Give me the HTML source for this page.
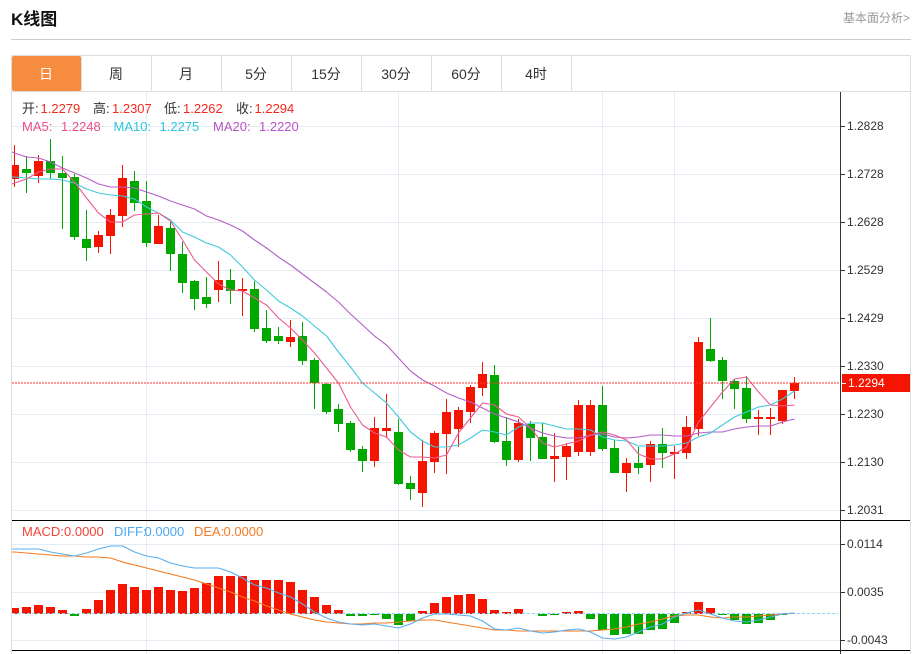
<!DOCTYPE html>
<html lang="zh">
<head>
<meta charset="utf-8">
<title>K线图</title>
<style>
html,body{margin:0;padding:0;background:#fff;width:915px;height:654px;overflow:hidden}
svg{display:block;font-family:"Liberation Sans","Noto Sans CJK SC",sans-serif}
.c{shape-rendering:crispEdges;fill:none}
.l{fill:none;stroke-width:1.1;stroke-linejoin:round}
.a{font-size:12px;fill:#333}
.t{font-size:14px;fill:#333;text-anchor:middle}
.i{font-size:13px}
</style>
</head>
<body>
<svg width="915" height="654" viewBox="0 0 915 654" xmlns="http://www.w3.org/2000/svg">
<defs><clipPath id="k"><rect x="12" y="92" width="828" height="562"/></clipPath></defs>

<text x="11" y="25" font-size="17" font-weight="bold" fill="#111">K线图</text>
<text x="910" y="22" font-size="12" fill="#999" text-anchor="end">基本面分析&gt;</text>
<path class="c" stroke="#ccc" d="M11 39.5H911"/>

<!-- frame + tabs -->
<path class="c" stroke="#ddd" d="M11.5 55.5H910.5V654M11.5 55.5V654M12 91.5H911M81.5 56V91M151.5 56V91M221.5 56V91M291.5 56V91M361.5 56V91M431.5 56V91M501.5 56V91M571.5 56V91"/>
<rect x="12" y="56" width="69" height="35" rx="2" fill="#f58c3f"/>
<text class="t" x="46" y="79" style="fill:#fff">日</text>
<text class="t" x="116" y="79">周</text>
<text class="t" x="186" y="79">月</text>
<text class="t" x="256" y="79">5分</text>
<text class="t" x="326" y="79">15分</text>
<text class="t" x="396" y="79">30分</text>
<text class="t" x="466" y="79">60分</text>
<text class="t" x="536" y="79">4时</text>

<!-- grid -->
<path class="c" stroke="#e3ecf3" d="M12 126.5H840M12 174.5H840M12 222.5H840M12 270.5H840M12 318.5H840M12 366.5H840M12 414.5H840M12 462.5H840M12 510.5H840M12 544.5H840M12 592.5H840M12 640.5H840M146.5 92V654M398.5 92V654M602.5 92V654M674.5 92V654"/>

<g clip-path="url(#k)">
<!-- candle wicks -->
<path class="c" stroke="#f51400" stroke-width="1" d="M14.5 145V187M38.5 155V183M98.5 231V253M110.5 209V254M122.5 165V227M158.5 215V244M218.5 261V302M242.5 278V316M290.5 320V347M374.5 417V467M386.5 394V438M422.5 440V507M434.5 431V473M446.5 399V474M458.5 407V447M470.5 385V423M482.5 362V396M518.5 419V462M554.5 433V482M566.5 443V480M578.5 400V456M590.5 400V456M626.5 458V492M650.5 441V482M674.5 446V479M686.5 416V459M698.5 337V436M758.5 410V435M770.5 408V435M782.5 390V424M794.5 377V399"/>
<path class="c" stroke="#00a800" stroke-width="1" d="M26.5 156V193M50.5 139V179M62.5 156V229M74.5 174V240M86.5 210V261M134.5 171V211M146.5 181V247M170.5 222V271M182.5 242V293M194.5 280V310M206.5 277V308M230.5 269V304M254.5 281V332M266.5 310V343M278.5 327V344M302.5 322V365M314.5 358V409M326.5 383V414M338.5 404V432M350.5 421V452M362.5 446V472M398.5 419V485M410.5 476V500M494.5 365V443M506.5 417V466M530.5 421V461M542.5 423V459M602.5 386V451M614.5 440V473M638.5 447V474M662.5 428V468M710.5 318V362M722.5 357V399M734.5 379V409M746.5 376V423"/>
<!-- candle bodies -->
<path class="c" stroke="#f51400" stroke-width="9" d="M14.5 165V179M38.5 161V176M98.5 235V247M110.5 215V236M122.5 178V216M158.5 226V244M218.5 280V290M242.5 289V291M290.5 337V342M374.5 428V461M386.5 428V431M422.5 461V493M434.5 433V462M446.5 412V434M458.5 410V429M470.5 387V412M482.5 374V388M518.5 423V460M554.5 456V459M566.5 446V457M578.5 405V452M590.5 405V452M626.5 463V473M650.5 444V465M674.5 452V454M686.5 427V453M698.5 342V429M758.5 417V419M770.5 417V419M782.5 390V421M794.5 383V391"/>
<path class="c" stroke="#00a800" stroke-width="9" d="M26.5 169V173M50.5 161V173M62.5 173V178M74.5 177V237M86.5 239V248M134.5 181V203M146.5 201V243M170.5 228V254M182.5 254V283M194.5 281V299M206.5 297V304M230.5 280V291M254.5 289V329M266.5 328V341M278.5 336V341M302.5 336V361M314.5 360V383M326.5 384V412M338.5 409V424M350.5 423V450M362.5 449V461M398.5 432V484M410.5 483V489M494.5 375V442M506.5 441V460M530.5 424V438M542.5 437V459M602.5 405V449M614.5 448V473M638.5 463V468M662.5 444V453M710.5 349V361M722.5 360V381M734.5 381V389M746.5 388V419"/>

<!-- MA20 -->
<polyline class="l" stroke="#b65ec8" points="12,152 14.5,153 26.5,157 38.5,158 50.5,162 62.5,168 74.5,173 86.5,178 98.5,184 110.5,187 122.5,187 134.5,188 146.5,192 158.5,196 170.5,201 182.5,205 194.5,209 206.5,216 218.5,220 230.5,225 242.5,231 254.5,240 266.5,248 278.5,257 290.5,265 302.5,274 314.5,283 326.5,292 338.5,302 350.5,314 362.5,325 374.5,336 386.5,345 398.5,358 410.5,371 422.5,380 434.5,386 446.5,393 458.5,398 470.5,402 482.5,408 494.5,414 506.5,418 518.5,422 530.5,428 542.5,433 554.5,436 566.5,438 578.5,438 590.5,435 602.5,434 614.5,437 626.5,438 638.5,437 650.5,435 662.5,435 674.5,436 686.5,436 698.5,433 710.5,432 722.5,432 734.5,429 746.5,427 758.5,426 770.5,426 782.5,422 794.5,419"/>
<!-- MA10 -->
<polyline class="l" stroke="#3fc9dd" points="12,177 14.5,177 26.5,178 38.5,179 50.5,179 62.5,180 74.5,183 86.5,189 98.5,193 110.5,195 122.5,196 134.5,199 146.5,207 158.5,213 170.5,220 182.5,232 194.5,237 206.5,243 218.5,247 230.5,255 242.5,267 254.5,280 266.5,290 278.5,301 290.5,308 302.5,316 314.5,326 326.5,336 338.5,352 350.5,367 362.5,383 374.5,393 386.5,403 398.5,417 410.5,432 422.5,441 434.5,447 446.5,447 458.5,445 470.5,438 482.5,430 494.5,432 506.5,435 518.5,427 530.5,423 542.5,423 554.5,426 566.5,429 578.5,429 590.5,430 602.5,437 614.5,440 626.5,441 638.5,446 650.5,446 662.5,446 674.5,445 686.5,443 698.5,437 710.5,433 722.5,425 734.5,417 746.5,412 758.5,407 770.5,405 782.5,399 794.5,391"/>
<!-- MA5 -->
<polyline class="l" stroke="#ec5a93" points="12,184 14.5,183 26.5,179 38.5,172 50.5,169 62.5,169 74.5,182 86.5,198 98.5,213 110.5,222 122.5,222 134.5,215 146.5,214 158.5,213 170.5,221 182.5,240 194.5,260 206.5,272 218.5,284 230.5,290 242.5,291 254.5,298 266.5,305 278.5,318 290.5,328 302.5,340 314.5,353 326.5,368 338.5,383 350.5,407 362.5,425 374.5,433 386.5,437 398.5,450 410.5,457 422.5,457 434.5,458 446.5,455 458.5,433 470.5,418 482.5,403 494.5,405 506.5,414 518.5,417 530.5,428 542.5,443 554.5,447 566.5,444 578.5,441 590.5,435 602.5,432 614.5,435 626.5,440 638.5,454 650.5,459 662.5,459 674.5,454 686.5,447 698.5,422 710.5,407 722.5,392 734.5,379 746.5,377 758.5,392 770.5,405 782.5,406 794.5,405"/>

<!-- current price line -->
<path fill="none" stroke="#f33" stroke-width="1" stroke-dasharray="2 1" d="M12 383H840"/>

<!-- MACD bars -->
<path class="c" stroke="#f51400" stroke-width="9" d="M14.5 608V614M26.5 607V614M38.5 605V614M50.5 607V614M62.5 610V614M86.5 609V614M98.5 600V614M110.5 590V614M122.5 584V614M134.5 587V614M146.5 590V614M158.5 587V614M170.5 590V614M182.5 591V614M194.5 588V614M206.5 583V614M218.5 576V614M230.5 576V614M242.5 576V614M254.5 580V614M266.5 580V614M278.5 580V614M290.5 582V614M302.5 590V614M314.5 597V614M326.5 605V614M338.5 610V614M422.5 611V614M434.5 603V614M446.5 597V614M458.5 595V614M470.5 594V614M482.5 599V614M494.5 610V614M506.5 612V614M518.5 609V614M566.5 612V614M578.5 611V614M686.5 612V614M698.5 602V614M710.5 608V614"/>
<path class="c" stroke="#00a800" stroke-width="9" d="M74.5 614V616M350.5 614V616M362.5 614V616M374.5 614V615M386.5 614V619M398.5 614V625M410.5 614V621M542.5 614V616M554.5 614V615M590.5 614V619M602.5 614V630M614.5 614V635M626.5 614V634M638.5 614V634M650.5 614V630M662.5 614V629M674.5 614V623M722.5 614V615M734.5 614V620M746.5 614V624M758.5 614V623M770.5 614V620M782.5 614V615"/>
<path class="c" stroke="#8ad6f2" stroke-width="1" stroke-dasharray="3 2" d="M12 613.5H838"/>

<!-- DEA -->
<polyline class="l" stroke="#f47a20" points="12,552 14.5,552 38.5,554 50.5,555 62.5,556 74.5,556 86.5,557 98.5,557 110.5,558 122.5,562 134.5,565 146.5,568 158.5,571 170.5,574 182.5,577 194.5,580 206.5,584 218.5,588 230.5,592 242.5,597 254.5,601 266.5,606 278.5,610 290.5,614 302.5,617 314.5,620 326.5,622 338.5,623 350.5,624 362.5,624 374.5,623 386.5,623 398.5,622 410.5,621 422.5,620 434.5,620 446.5,622 458.5,624 470.5,626 482.5,628 494.5,630 506.5,630 518.5,631 530.5,631 542.5,631 554.5,631 566.5,631 578.5,631 590.5,631 602.5,630 614.5,629 626.5,627 638.5,624 650.5,622 662.5,619 674.5,616 686.5,615 698.5,615 710.5,617 722.5,618 734.5,617 746.5,617 758.5,616 770.5,615 782.5,614 794.5,613"/>
<!-- DIFF -->
<polyline class="l" stroke="#5aaef0" points="12,549 14.5,549 38.5,549 50.5,552 62.5,554 74.5,556 86.5,553 98.5,549 110.5,546 122.5,546 134.5,552 146.5,556 158.5,558 170.5,563 182.5,566 194.5,568 206.5,568 218.5,568 230.5,572 242.5,578 254.5,585 266.5,588 278.5,593 290.5,597 302.5,604 314.5,612 326.5,618 338.5,622 350.5,624 362.5,625 374.5,624 386.5,626 398.5,628 410.5,624 422.5,618 434.5,614 446.5,614 458.5,615 470.5,616 482.5,621 494.5,629 506.5,630 518.5,628 530.5,631 542.5,633 554.5,632 566.5,630 578.5,629 590.5,632 602.5,638 614.5,639 626.5,637 638.5,632 650.5,627 662.5,624 674.5,617 686.5,613 698.5,610 710.5,614 722.5,618 734.5,621 746.5,622 758.5,620 770.5,617 782.5,614 794.5,613"/>
</g>

<!-- axes -->
<path class="c" stroke="#000" d="M12 520.5H910M12 650.5H910"/>
<path class="c" stroke="#333" d="M840.5 92V654M841 126.5H845M841 174.5H845M841 222.5H845M841 270.5H845M841 318.5H845M841 366.5H845M841 414.5H845M841 462.5H845M841 510.5H845M841 544.5H845M841 592.5H845M841 640.5H845"/>
<text class="a" x="847" y="130">1.2828</text>
<text class="a" x="847" y="178">1.2728</text>
<text class="a" x="847" y="226">1.2628</text>
<text class="a" x="847" y="274">1.2529</text>
<text class="a" x="847" y="322">1.2429</text>
<text class="a" x="847" y="370">1.2330</text>
<text class="a" x="847" y="418">1.2230</text>
<text class="a" x="847" y="466">1.2130</text>
<text class="a" x="847" y="514">1.2031</text>
<text class="a" x="847" y="548">0.0114</text>
<text class="a" x="847" y="596">0.0035</text>
<text class="a" x="847" y="644">-0.0043</text>
<rect x="842" y="374" width="68" height="18" fill="#f51400"/>
<path class="c" stroke="#fff" d="M842 383.5H846"/>
<text x="848" y="387" font-size="12" fill="#fff">1.2294</text>

<!-- info -->
<g class="i" fill="#f5281e">
<text x="22" y="113" fill="#333">开:</text><text x="40.5" y="113">1.2279</text>
<text x="93" y="113" fill="#333">高:</text><text x="112" y="113">1.2307</text>
<text x="164" y="113" fill="#333">低:</text><text x="183" y="113">1.2262</text>
<text x="236" y="113" fill="#333">收:</text><text x="254.5" y="113">1.2294</text>
</g>
<g class="i">
<text x="22" y="131" fill="#ec4e8a">MA5:</text><text x="61" y="131" fill="#ec4e8a">1.2248</text>
<text x="113.5" y="131" fill="#2cc6dc">MA10:</text><text x="159.5" y="131" fill="#2cc6dc">1.2275</text>
<text x="213" y="131" fill="#b653c8">MA20:</text><text x="259" y="131" fill="#b653c8">1.2220</text>
<text x="22" y="536" fill="#f44336">MACD:</text><text x="64" y="536" fill="#f44336">0.0000</text>
<text x="114" y="536" fill="#4da6ef">DIFF:</text><text x="144.5" y="536" fill="#4da6ef">0.0000</text>
<text x="194" y="536" fill="#f47b25">DEA:</text><text x="223.5" y="536" fill="#f47b25">0.0000</text>
</g>
</svg>
</body>
</html>
